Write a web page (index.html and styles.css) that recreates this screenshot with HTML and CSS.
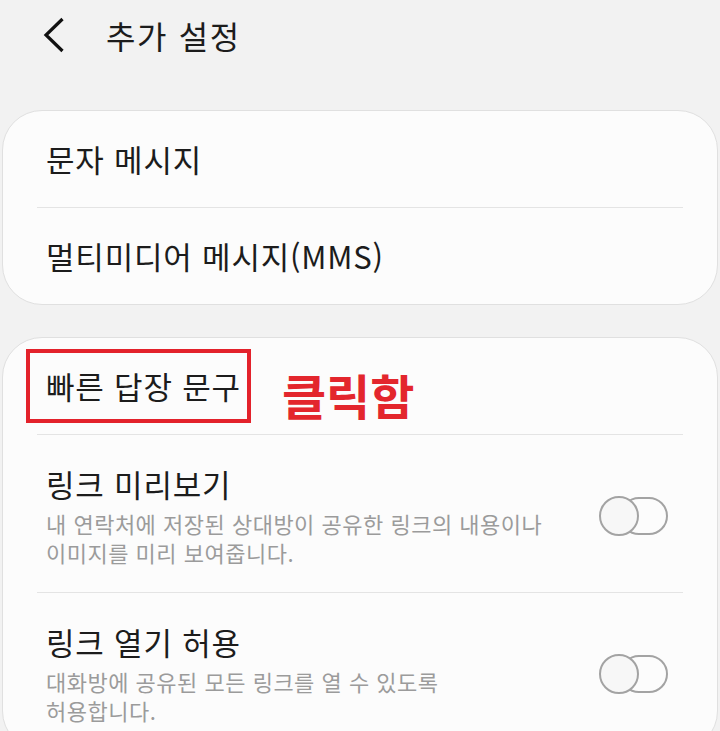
FILE: index.html
```html
<!DOCTYPE html>
<html lang="ko">
<head>
<meta charset="utf-8">
<title>추가 설정</title>
<link rel="stylesheet" href="styles.css">
</head>
<body>
<div class="page">
  <header class="appbar">
    <svg class="back" viewBox="0 0 24 36" width="24" height="36" aria-hidden="true">
      <path d="M19.5 2 L3 18 L19.5 34" fill="none" stroke="#111" stroke-width="3.2" stroke-linecap="butt" stroke-linejoin="miter"/>
    </svg>
    <h1 class="title">추가 설정</h1>
  </header>

  <section class="card">
    <div class="row"><span class="label">문자 메시지</span></div>
    <div class="divider"></div>
    <div class="row"><span class="label">멀티미디어 메시지(MMS)</span></div>
  </section>

  <section class="card">
    <div class="row">
      <span class="label highlight">빠른 답장 문구</span>
      <span class="note">클릭함</span>
    </div>
    <div class="divider"></div>
    <div class="trow">
      <div class="texts">
        <div class="label">링크 미리보기</div>
        <div class="sub">내 연락처에 저장된 상대방이 공유한 링크의 내용이나<br>이미지를 미리 보여줍니다.</div>
      </div>
      <div class="toggle"><span class="track"></span><span class="knob"></span></div>
    </div>
    <div class="divider"></div>
    <div class="trow">
      <div class="texts">
        <div class="label">링크 열기 허용</div>
        <div class="sub">대화방에 공유된 모든 링크를 열 수 있도록<br>허용합니다.</div>
      </div>
      <div class="toggle"><span class="track"></span><span class="knob"></span></div>
    </div>
  </section>
</div>
</body>
</html>
```
FILE: styles.css
```css
* { box-sizing: border-box; }
html, body { margin: 0; padding: 0; }
body {
  background: #f2f2f2;
  font-family: "Noto Sans CJK KR", "Noto Sans", sans-serif;
  color: #1c1c1c;
}
.page { display: flex; flex-direction: column; }

.appbar {
  height: 70px;
  display: flex;
  align-items: center;
  padding-left: 43px;
  margin-bottom: 40px;
}
.back { width: 24px; height: 36px; display: block; }
.title {
  margin: 0 0 0 39px;
  font-size: 32px;
  font-weight: 400;
  line-height: 40px;
  letter-spacing: 1.6px;
}

.card {
  margin: 0 2px;
  background: #fcfcfc;
  border: 1px solid #e0e0e0;
  border-radius: 40px;
  display: flex;
  flex-direction: column;
}
.card + .card { margin-top: 32px; }

.row {
  height: 96px;
  display: flex;
  align-items: center;
  padding-left: 43px;
}
.divider {
  height: 1px;
  background: #e4e4e4;
  margin: 0 34px;
}
.label {
  font-size: 31px;
  line-height: 38px;
  letter-spacing: 0.8px;
  color: #1c1c1c;
}

.highlight {
  display: flex;
  align-items: center;
  height: 74px;
  border: 4px solid #e3222b;
  padding: 0 6px 0 16px;
  margin-left: -20px;
}
.note {
  margin-left: 31px;
  margin-top: 16px;
  font-size: 48px;
  font-weight: 700;
  line-height: 52px;
  color: #e3262d;
}

.trow {
  display: flex;
  align-items: center;
  padding: 30px 49px 25px 43px;
}
.texts { display: flex; flex-direction: column; }
.sub {
  margin-top: 6px;
  font-size: 22px;
  line-height: 29px;
  letter-spacing: 0.5px;
  color: #9b9b9b;
}

.toggle {
  margin-left: auto;
  position: relative;
  width: 69px;
  height: 40px;
  flex: none;
}
.track {
  position: absolute;
  left: 21px;
  top: 1px;
  width: 48px;
  height: 38px;
  border: 2px solid #a3a3a3;
  border-radius: 19px;
  background: #fcfcfc;
}
.knob {
  position: absolute;
  left: 0;
  top: 0;
  width: 40px;
  height: 40px;
  border: 2px solid #a3a3a3;
  border-radius: 50%;
  background: #f7f7f7;
}
```
